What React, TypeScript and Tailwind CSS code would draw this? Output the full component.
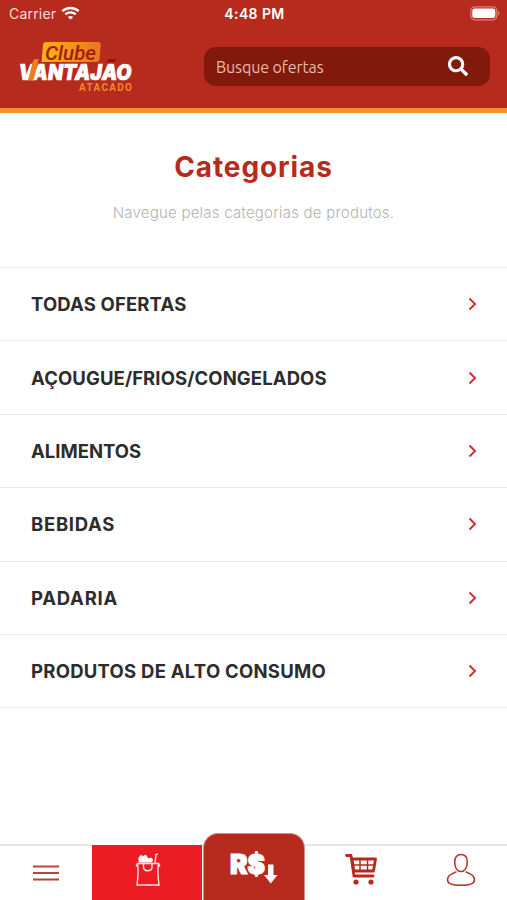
import { FaSearch } from "react-icons/fa";

const categories = [
  { name: "TODAS OFERTAS", tracking: "tracking-[0.15px]" },
  { name: "AÇOUGUE/FRIOS/CONGELADOS", tracking: "tracking-[0.1px]" },
  { name: "ALIMENTOS", tracking: "tracking-[0px]" },
  { name: "BEBIDAS", tracking: "tracking-[0.7px]" },
  { name: "PADARIA", tracking: "tracking-[0.75px]" },
  { name: "PRODUTOS DE ALTO CONSUMO", tracking: "tracking-[0.25px]" },
];

function StatusBar() {
  return (
    <div className="grid h-7 grid-cols-3 items-center pl-[9px] pr-[7px] text-[14px] leading-7 text-white">
      <div className="flex items-center gap-[6px]">
        <span className="tracking-[0.2px] text-[#fbdcd6]">Carrier</span>
        <svg className="-ml-px -mt-[2px]" width="19" height="14" viewBox="0 0 19 14" fill="none" stroke="#fff" strokeWidth="2.3">
          <path d="M1.3 5.2C5.800.9 13.200.9 17.700 5.200" />
          <path d="M4.3 8.3c2.9-2.7 7.5-2.7 10.4 0" />
          <path d="M9.5 13.6 6.8 10.9c1.5-1.3 3.9-1.3 5.4 0z" fill="#fff" stroke="none" />
        </svg>
      </div>
      <span className="text-center font-semibold tracking-[0.4px]">4:48 PM</span>
      <svg className="-mt-[2px] justify-self-end" width="31" height="15" viewBox="0 0 31 15">
        <rect x="1.8" y=".8" width="26" height="13" rx="4" fill="none" stroke="#d9837a" strokeWidth="1.2" />
        <rect x="3.3" y="2.5" width="23" height="9.6" rx="2.5" fill="#fff" />
        <path d="M29 5c1.800.6 1.800 4 0 4.600z" fill="#d9837a" />
      </svg>
    </div>
  );
}

function Logo() {
  return (
    <svg className="shrink-0 overflow-visible" width="116" height="54" viewBox="18 41 116 54">
      <defs>
        <linearGradient id="badge">
          <stop offset="0" stopColor="#fbb416" />
          <stop offset="1" stopColor="#e97522" />
        </linearGradient>
        {/* white letters, dark red tilde */}
        <linearGradient id="letters" gradientUnits="userSpaceOnUse" x1="0" y1="0" x2="0" y2="100">
          <stop offset="0.628" stopColor="#930f14" />
          <stop offset="0.628" stopColor="#fff" />
        </linearGradient>
      </defs>
      <path d="M46 42h52q3 0 2.800 3l-1.200 14q-.3 3-3.300 3H41.500l1.500-17q.3-3 3-3z" fill="url(#badge)" />
      <text className="font-[Roboto,sans-serif]" x="45" y="60" fontSize="20" fontStyle="italic" fontWeight="500" fill="#a61b12" textLength="51" lengthAdjust="spacingAndGlyphs">Clube</text>
      <text x="18.500" y="80.300" fontSize="21.500" fontStyle="italic" fontWeight="900" fill="url(#letters)" stroke="url(#letters)" strokeWidth=".7" textLength="113" lengthAdjust="spacingAndGlyphs">VANTAJÃO</text>
      <path d="m28 80.500 4.500-18q.8-3.500 3.500-3.500h2.800l-4.500 18.500q-.7 3-3.300 3z" fill="#ee7d20" />
      <text className="font-[Roboto,sans-serif]" x="79" y="91.300" fontSize="10" fontWeight="700" fill="#f08a24" textLength="53">ATACADO</text>
    </svg>
  );
}

function Header() {
  return (
    <header className="h-[113px] border-b-[5px] border-[#f6922e] bg-[#b62b1d]">
      <StatusBar />
      <div className="flex items-start justify-between pl-[18px] pr-[17px] pt-[13px]">
        <Logo />
        <div className="mt-[6px] flex h-[39px] w-[286px] items-center justify-between rounded-[12px] bg-[#81190d] pl-3 pr-[22px]">
          <span className="font-[Ubuntu,'Noto_Sans',sans-serif] text-[16px] tracking-[-0.1px] text-[#eab8a8]">Busque ofertas</span>
          <FaSearch className="-mt-[2px] text-white" size={20} />
        </div>
      </div>
    </header>
  );
}

function BagIcon() {
  return (
    <svg width="26" height="34" viewBox="0 0 26 34" fill="none" stroke="#ffe3e3" strokeWidth="1.4">
      <path d="M2.500 10.500h21l-.5 5c-.3 6 .3 11 1 16.500H2c.7-5.500 1.300-10.500 1-16.500z" />
      <path d="M2.500 10.500 1 13.500M23.500 10.500l1.500 3M8.500 10.500V14c0 5 8.500 5 8.500 0v-3.500" />
      <path d="M3.800 9.500 3.300 5l2.500-3 2.500 1 2.500-1.500L12.500 4l1 1.500 2.500-1 2 2-.8 3z" fill="#fff" stroke="none" />
      <path d="m20 10 1-8.500 2-.5" />
    </svg>
  );
}

function CartIcon() {
  return (
    <svg width="34" height="32" viewBox="0 0 34 32" fill="none" stroke="#b62b1d">
      <path d="M2.500 2.500H7l3 20.500H29" strokeWidth="2.800" strokeLinecap="round" strokeLinejoin="round" />
      <path d="M8 6h23.500L29.500 18H9.800z" strokeWidth="2.800" strokeLinejoin="round" />
      <path d="M8.500 12H30M16 6v12M23.500 6v12" strokeWidth="1.500" />
      <circle cx="12" cy="29" r="2.600" fill="#b62b1d" stroke="none" />
      <circle cx="27" cy="29" r="2.600" fill="#b62b1d" stroke="none" />
    </svg>
  );
}

function UserIcon() {
  return (
    <svg width="30" height="34" viewBox="0 0 30 34" fill="none" stroke="#b6392d" strokeWidth="1.600">
      <path d="M15 1.500c4 0 6.300 2.800 6.300 7.500 0 5.500-2.500 9.500-6.300 9.500S8.700 14.500 8.700 9c0-4.700 2.300-7.500 6.300-7.500z" />
      <path d="M10.500 18.500C7.500 21 1.700 20.500 1.500 27c0 3.500 5.500 5.300 13.500 5.300s13.500-1.800 13.500-5.300c-.2-6.500-6-6-9-8.500" />
    </svg>
  );
}

function BottomNav() {
  return (
    <nav className="flex h-[68px] items-end">
      <div className="flex h-[56px] w-[92px] items-center justify-center border-t-2 border-[#e5e5e5]">
        <svg width="28" height="18" viewBox="0 0 28 18" stroke="#b6443a" strokeWidth="2.2" className="-ml-px">
          <path d="M1 2.500h26M1 9h26M1 15.500h26" />
        </svg>
      </div>
      <div className="flex h-[55px] w-[110px] justify-center bg-[#ed1c24] pl-[2px] pt-[8px]">
        <BagIcon />
      </div>
      <div className="ml-[1px] h-[67px] w-[102px] rounded-t-[15px] border border-b-0 border-[#d88f87] bg-[#b62b1d]">
        <svg width="100" height="66" viewBox="0 0 100 66" fill="#fff">
          <text x="26" y="39.500" fontSize="27" fontWeight="900" stroke="#fff" strokeWidth="1.200" textLength="35" lengthAdjust="spacingAndGlyphs">R$</text>
          <path d="M64 30.500h5.500V41h4L66.800 49.500 60 41h4z" />
        </svg>
      </div>
      <div className="flex h-[56px] flex-1 justify-between border-t-2 border-[#e5e5e5] pl-[39px] pr-[31px] pt-[7px]">
        <CartIcon />
        <UserIcon />
      </div>
    </nav>
  );
}

export default function App() {
  return (
    <div className="flex h-[900px] w-[507px] flex-col overflow-hidden bg-white font-[Inter,'Liberation_Sans',sans-serif]">
      <Header />
      <main className="flex-1">
        <div className="h-[154px] pt-[36px] text-center">
          <h1 className="text-[28px] font-bold leading-9 tracking-[0.9px] text-[#b62b1d]">Categorias</h1>
          <p className="mt-[18px] text-[15px] font-light leading-5 tracking-[0.22px] text-[#b3b3b3]">
            Navegue pelas categorias de produtos.
          </p>
        </div>
        <ul className="border-t border-[#e8e8e8]">
          {categories.map((c) => (
            <li key={c.name} className="flex h-[73.4px] items-center justify-between border-b border-[#e8e8e8] pl-[31px] pr-[30px]">
              <span className={`pt-[2px] text-[18.5px] font-bold text-[#2d2d2d] ${c.tracking}`}>{c.name}</span>
              <svg width="9" height="14" viewBox="0 0 9 14" fill="none" stroke="#d62f36" strokeWidth="2">
                <path d="m1.500 1.500 5.500 5.500-5.500 5.500" />
              </svg>
            </li>
          ))}
        </ul>
      </main>
      <BottomNav />
    </div>
  );
}
